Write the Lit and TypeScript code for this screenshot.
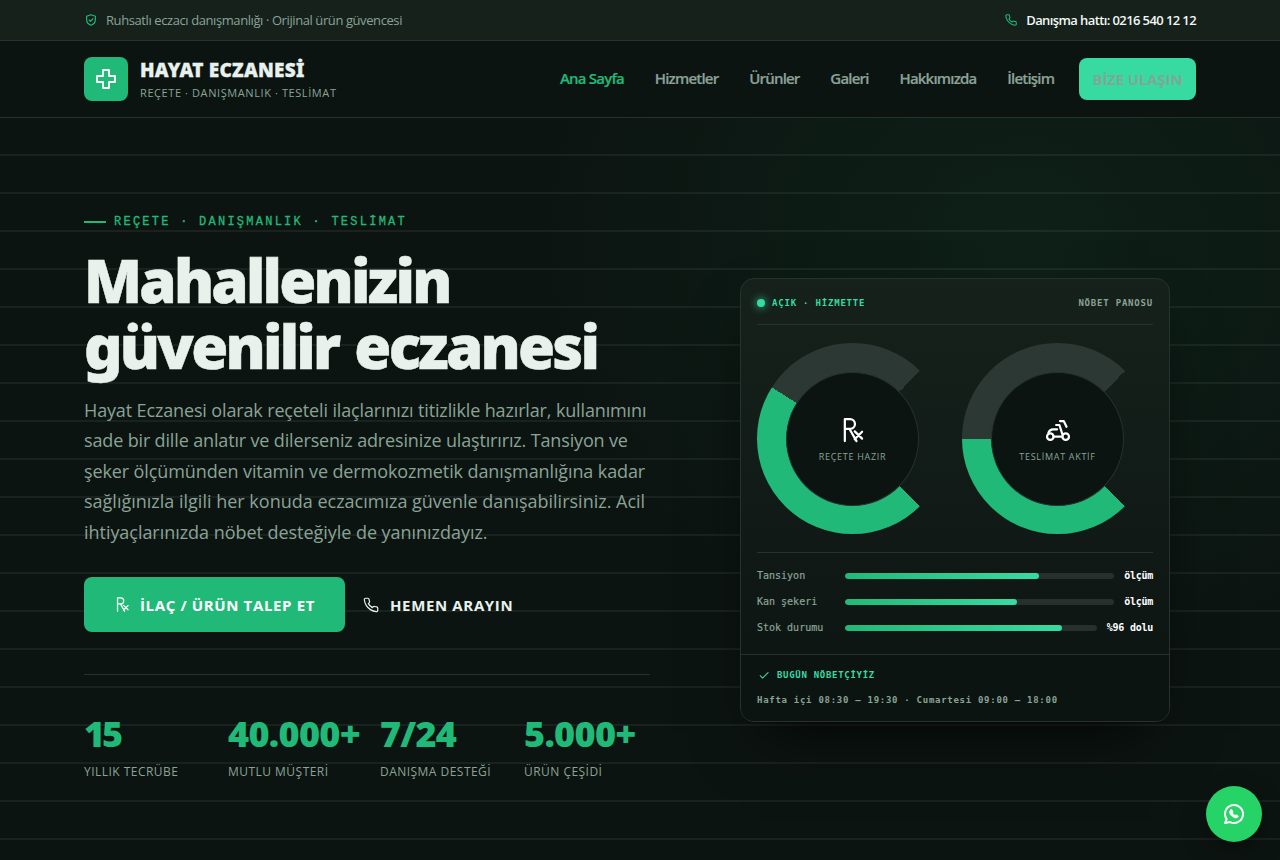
import { LitElement, html, css, svg } from "lit";
import { customElement } from "lit/decorators.js";

const icons = {
  shield: svg`<path d="M12 3l7.5 2.6v5.6c0 5-3.200 8.400-7.500 9.800-4.300-1.400-7.500-4.800-7.500-9.800V5.600z"/><path d="M8.800 12l2.300 2.300 4.300-4.400"/>`,
  phone: svg`<g transform="translate(1.2 1.2) scale(.9)"><path d="M22 16.920v3a2 2 0 0 1-2.180 2 19.790 19.790 0 0 1-8.630-3.070 19.500 19.500 0 0 1-6-6 19.790 19.790 0 0 1-3.070-8.670A2 2 0 0 1 4.110 2h3a2 2 0 0 1 2 1.720c.127.960.361 1.903.700 2.810a2 2 0 0 1-.450 2.110L8.090 9.910a16 16 0 0 0 6 6l1.270-1.270a2 2 0 0 1 2.110-.450c.907.339 1.850.573 2.810.700A2 2 0 0 1 22 16.920z"/></g>`,
  cross: svg`<path d="M9 3h6v6h6v6h-6v6H9v-6H3V9h6z"/>`,
  rx: svg`<path d="M5 21.500V2.700h4.500a4.200 4.200 0 0 1 0 8.400H5M9 11.200l6 10.300M13.500 13.200l6.300 6.200M19.800 13.500l-6.300 6.500"/>`,
  scooter: svg`<circle cx="5.400" cy="17.700" r="2.800"/><circle cx="18.600" cy="17.700" r="2.800"/><path d="M8.200 17.700h7.600M3.800 14.300c.8-1.900 2-2.900 3.800-2.900h3.600M10.400 7.700h2.800l2.600 8M13.700 4.300h3.200l2.400 5"/>`,
  check: svg`<path d="M5.500 13.200l4 4L19 8"/>`,
  whatsapp: svg`<path d="M3 21l1.650-3.800a9 9 0 1 1 3.400 2.900L3 21"/><path fill="currentColor" stroke-width=".6" d="M8.600 7.900c.7-.5 1.500-.4 1.800.4l.6 1.400c.2.5 0 .9-.5 1.300.5 1.100 1.300 1.900 2.500 2.400.5-.6.9-.8 1.300-.6l1.500.7c.7.3.7 1 .2 1.600-1.100 1.300-2.900 1.100-4.800 0-2.400-1.400-3.800-3.300-3.600-5.400.1-.8.4-1.400 1-1.800z"/>`,
};

const icon = (name: keyof typeof icons, size: number, width = 1.8) => html`
  <svg width=${size} height=${size} viewBox="0 0 24 24" fill="none" stroke="currentColor"
    stroke-width=${width} stroke-linecap="round" stroke-linejoin="round">${icons[name]}</svg>`;

const NAV = ["Ana Sayfa", "Hizmetler", "Ürünler", "Galeri", "Hakkımızda", "İletişim"];
const STATS: [string, string, number][] = [
  ["15", "YILLIK TECRÜBE", -3], ["40.000+", "MUTLU MÜŞTERİ", -0.7],
  ["7/24", "DANIŞMA DESTEĞİ", -0.8], ["5.000+", "ÜRÜN ÇEŞİDİ", -0.7],
];
const METERS: [string, number, string][] = [["Tansiyon", 72, "ölçüm"], ["Kan şekeri", 64, "ölçüm"], ["Stok durumu", 86, "%96 dolu"]];
// Each line of the introduction with its tracking in pixels.
const LEAD: [string, number][] = [
  ["Hayat Eczanesi olarak reçeteli ilaçlarınızı titizlikle hazırlar, kullanımını", -0.14],
  ["sade bir dille anlatır ve dilerseniz adresinize ulaştırırız. Tansiyon ve", -0.15],
  ["şeker ölçümünden vitamin ve dermokozmetik danışmanlığına kadar", -0.11],
  ["sağlığınızla ilgili her konuda eczacımıza güvenle danışabilirsiniz. Acil", 0],
  ["ihtiyaçlarınızda nöbet desteğiyle de yanınızdayız.", -0.04],
];

@customElement("app-root")
export class AppRoot extends LitElement {
  static styles = css`
    :host { display: block; height: 860px; overflow: hidden; position: relative; background: #0c1411; color: #e8f1ec;
      font-family: "Open Sans", "Noto Sans", sans-serif; }
    * { box-sizing: border-box; }
    svg { display: block; flex: none; }
    .wrap { width: 1112px; margin: 0 auto; }
    .top { height: 41px; background: #16211c; border-bottom: 1px solid #26322d; font-size: 13px; }
    .top .wrap { height: 40px; display: flex; justify-content: space-between; align-items: center; }
    .note, .line { display: flex; align-items: center; gap: 8px; color: #8aa396; white-space: nowrap; }
    .note svg, .line svg { color: #21b978; }
    .note { letter-spacing: -0.41px; }
    .line { color: #f0f7f3; font-weight: 600; letter-spacing: -0.6px; }
    .head { height: 77px; border-bottom: 1px solid #26322d; }
    .head .wrap { height: 76px; display: flex; justify-content: space-between; align-items: center; }
    .brand { display: flex; gap: 12px; align-items: center; white-space: nowrap; }
    .mark { width: 44px; height: 44px; border-radius: 8px; background: #21b978; color: #fff; display: grid; place-items: center; }
    .name { font: 900 19px/22px "Noto Sans", sans-serif; letter-spacing: 0.25px; padding-top: 1px; margin-bottom: 1px; -webkit-text-stroke: 0.3px currentColor; }
    .tag { font-size: 11px; line-height: 15px; margin-top: 4px; color: #8aa396; letter-spacing: 0.59px; }
    .nav { display: flex; align-items: center; gap: 30.8px; font-size: 15px; font-weight: 600; color: #8ba197; white-space: nowrap; letter-spacing: -0.8px; -webkit-text-stroke: 0.2px currentColor; }
    .nav span:not(.cta) { padding-bottom: 2px; }
    .nav .active { color: #21b978; }
    .cta { width: 117px; height: 42px; margin-left: -6px; padding-bottom: 1px; border-radius: 8px; background: #37dba2; display: grid; place-items: center; font-weight: 700; color: #80a796; letter-spacing: -0.15px; -webkit-text-stroke: 0; }
    .hero { height: 764px; background:
      radial-gradient(720px 640px at 80% 16%, rgba(33,185,110,.075), transparent 68%),
      repeating-linear-gradient(180deg, transparent 0 36px, rgba(255,255,255,.06) 36px 38px); }
    .cols { height: 764px; display: grid; grid-template-columns: 566px 482px; gap: 64px; align-items: center; }
    .intro { padding-bottom: 6px; }
    .eyebrow { display: flex; align-items: center; gap: 8px; height: 16px; color: #21b978; font: 12px/16px "Liberation Mono", monospace; letter-spacing: 2.25px; white-space: nowrap; -webkit-text-stroke: 0.3px currentColor; }
    .dash { width: 22px; height: 2px; background: #21b978; }
    h1 { margin: 17px 0 0; font: 900 60px/66px "Noto Sans", sans-serif; letter-spacing: -2.75px; word-spacing: 3px; white-space: nowrap; -webkit-text-stroke: 0.5px currentColor; }
    .lead { margin-top: 16px; font-size: 18px; line-height: 30.5px; color: #8aa396; white-space: nowrap; }
    .acts { display: flex; align-items: center; margin-top: 30px; gap: 17px; font-size: 15px; font-weight: 700; white-space: nowrap; letter-spacing: 0.64px; }
    .primary { width: 261px; height: 55px; border-radius: 8px; background: #21b978; color: #fff; display: flex; align-items: center; justify-content: center; gap: 9px; }
    .call { display: flex; align-items: center; gap: 10px; }
    .stats { margin-top: 42px; padding-top: 39px; border-top: 1px solid #26322d; display: grid; grid-template-columns: 144px 152px 144px 1fr; white-space: nowrap; }
    .num { font: 900 36px/40px "Noto Sans", sans-serif; color: #21b978; }
    .cap { font-size: 12px; line-height: 16px; margin-top: 10px; color: #8aa396; letter-spacing: 0.47px; }
    .card { width: 430px; height: 444px; justify-self: center; border: 1px solid #26322d; border-radius: 14px; overflow: hidden;
      background: linear-gradient(180deg, #16211c, #0c1411); box-shadow: 0 30px 60px -20px rgba(0,0,0,.7); font-family: "DejaVu Sans Mono", monospace; white-space: nowrap; }
    .body { height: 375px; padding: 0 16px; }
    .bar { height: 46px; border-bottom: 1px solid #26322d; display: flex; align-items: center; justify-content: space-between; font-size: 9px; font-weight: 700; letter-spacing: 0.8px; color: #8aa396; padding-top: 2px; }
    .open { display: flex; align-items: center; gap: 7px; color: #37dba2; }
    .dot { width: 8px; height: 8px; border-radius: 50%; background: #37dba2; box-shadow: 0 0 8px #37dba2; }
    .rings { display: grid; grid-template-columns: 191px 191px; gap: 14px; padding: 18px 0; height: 228px; border-bottom: 1px solid #26322d; }
    .ring { width: 191px; height: 191px; border-radius: 50%; padding: 29px; }
    .core { height: 134px; border: 1px solid #26322d; border-radius: 50%; background: #0c1411; color: #fff; display: flex; flex-direction: column; align-items: center; justify-content: center; gap: 6px; padding-top: 1px; }
    .core span { font: 9px/14px "Open Sans", sans-serif; letter-spacing: 0.7px; color: #8aa396; }
    .meters { padding-top: 10px; }
    .meter { height: 26px; display: flex; align-items: center; font-size: 10px; color: #8aa396; }
    .label { width: 88px; padding-bottom: 1px; -webkit-text-stroke: 0.2px currentColor; }
    .track { flex: 1; height: 6px; border-radius: 3px; background: #26302c; overflow: hidden; }
    .fill { height: 6px; border-radius: 3px; background: linear-gradient(90deg, #21b978, #37dba2); }
    .val { margin-left: 10px; padding-bottom: 1px; color: #fff; font-weight: 700; letter-spacing: -0.25px; }
    .foot { height: 67px; border-top: 1px solid #26322d; background: #0c1411; padding: 11px 16px; }
    .duty { display: flex; align-items: center; gap: 6px; height: 18px; color: #37dba2; font-weight: 700; font-size: 9px; letter-spacing: 0.7px; }
    .hours { font-size: 9px; line-height: 14px; margin-top: 9px; color: #8aa396; letter-spacing: 0.72px; font-weight: 700; }
    .fab { position: absolute; left: 1206px; top: 786px; width: 56px; height: 56px; border-radius: 50%; background: #25d366; color: #fff; display: grid; place-items: center; box-shadow: 0 8px 24px rgba(0,0,0,.4); }
  `;

  private ring(share: number, name: keyof typeof icons, text: string) {
    const end = share * 270;
    return html`<div class="ring" style=${`background:conic-gradient(from 135deg,#21b978 0 ${end}deg,#2c3833 ${end}deg 270deg,transparent 270deg)`}>
      <div class="core">${icon(name, 28, 1.9)}<span>${text}</span></div>
    </div>`;
  }

  render() {
    return html`
      <div class="top"><div class="wrap">
        <div class="note">${icon("shield", 14, 2)}<span>Ruhsatlı eczacı danışmanlığı · Orijinal ürün güvencesi</span></div>
        <div class="line">${icon("phone", 14, 2)}<span>Danışma hattı: 0216 540 12 12</span></div>
      </div></div>
      <header class="head"><div class="wrap">
        <div class="brand"><div class="mark">${icon("cross", 24)}</div>
          <div><div class="name">HAYAT ECZANESİ</div><div class="tag">REÇETE · DANIŞMANLIK · TESLİMAT</div></div></div>
        <nav class="nav">${NAV.map((n, i) => html`<span class=${i ? "" : "active"}>${n}</span>`)}<span class="cta">BİZE ULAŞIN</span></nav>
      </div></header>
      <section class="hero"><div class="wrap cols">
        <div class="intro">
          <div class="eyebrow"><i class="dash"></i><span>REÇETE · DANIŞMANLIK · TESLİMAT</span></div>
          <h1>Mahallenizin<br>güvenilir eczanesi</h1>
          <div class="lead">${LEAD.map(([l, s]) => html`<div style=${`letter-spacing:${s}px`}>${l}</div>`)}</div>
          <div class="acts"><div class="primary">${icon("rx", 17)}<span>İLAÇ / ÜRÜN TALEP ET</span></div>
            <div class="call">${icon("phone", 18)}<span>HEMEN ARAYIN</span></div></div>
          <div class="stats">${STATS.map(([n, c, s]) => html`<div><div class="num" style=${`letter-spacing:${s}px`}>${n}</div><div class="cap">${c}</div></div>`)}</div>
        </div>
        <div class="card">
          <div class="body">
            <div class="bar"><div class="open"><i class="dot"></i><span>AÇIK · HİZMETTE</span></div><span>NÖBET PANOSU</span></div>
            <div class="rings">${this.ring(0.62, "rx", "REÇETE HAZIR")}${this.ring(0.5, "scooter", "TESLİMAT AKTİF")}</div>
            <div class="meters">${METERS.map(([l, p, v]) => html`<div class="meter"><span class="label">${l}</span>
              <div class="track"><div class="fill" style=${`width:${p}%`}></div></div><span class="val">${v}</span></div>`)}</div>
          </div>
          <div class="foot"><div class="duty">${icon("check", 14)}<span>BUGÜN NÖBETÇİYİZ</span></div>
            <div class="hours">Hafta içi 08:30 – 19:30 · Cumartesi 09:00 – 18:00</div></div>
        </div>
      </div></section>
      <div class="fab">${icon("whatsapp", 24, 2)}</div>`;
  }
}
